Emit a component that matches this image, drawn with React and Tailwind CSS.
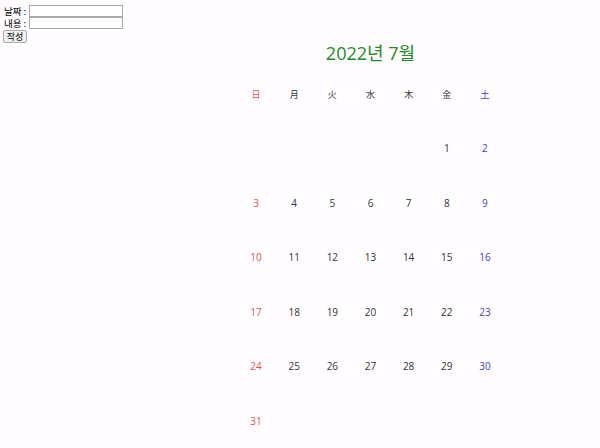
import React from "react";

const F = { fontFamily: '"Open Sans", "Noto Sans CJK KR", sans-serif' };
const K = { fontFamily: '"Noto Sans CJK KR", sans-serif' };

export default function App() {
  const heads = ["日", "月", "火", "水", "木", "金", "土"];
  const cells = [null, null, null, null, null, 1, 2];
  for (let d = 3; d <= 31; d++) cells.push(d);
  while (cells.length % 7) cells.push(null);
  const color = (i) =>
    i % 7 === 0 ? "text-[#e85050]" : i % 7 === 6 ? "text-[#4040d8]" : "text-[#333]";
  return (
    <div className="flex w-[600px] h-[448px] bg-[#fffdff] overflow-hidden" style={F}>
      <div className="w-[124px] shrink-0 pl-[4px] pt-[5px] text-[9.5px] text-black" style={K}>
        <div className="flex items-center h-[12px] leading-[12px]">
          <span className="w-[25px] whitespace-nowrap">날짜 :</span>
          <input className="w-[94px] h-[12px] border border-[#aaa] bg-white" />
        </div>
        <div className="flex items-center h-[12px] leading-[12px]">
          <span className="w-[25px] whitespace-nowrap">내용 :</span>
          <input className="w-[94px] h-[12px] border border-[#aaa] bg-white" />
        </div>
        <button className="-ml-[1px] h-[13px] w-[24px] text-[9px] leading-[11px] border border-[#aaa] rounded-[2px] bg-[#efefef]">
          작성
        </button>
      </div>
      <div className="ml-[113px] w-[267px] pt-[40px]">
        <div className="h-[27px] text-center text-[18px] leading-[27px] text-[#228b22]">2022년 7월</div>
        <div className="grid grid-cols-7">
          {heads.map((h, i) => (
            <div key={h} className={`h-[54.5px] flex items-center justify-center text-[9px] ${color(i)}`} style={K}>
              {h}
            </div>
          ))}
          {cells.map((d, i) => (
            <div key={i} className={`h-[54.5px] flex items-center justify-center text-[10px] ${color(i)}`}>
              {d ?? ""}
            </div>
          ))}
        </div>
      </div>
    </div>
  );
}
